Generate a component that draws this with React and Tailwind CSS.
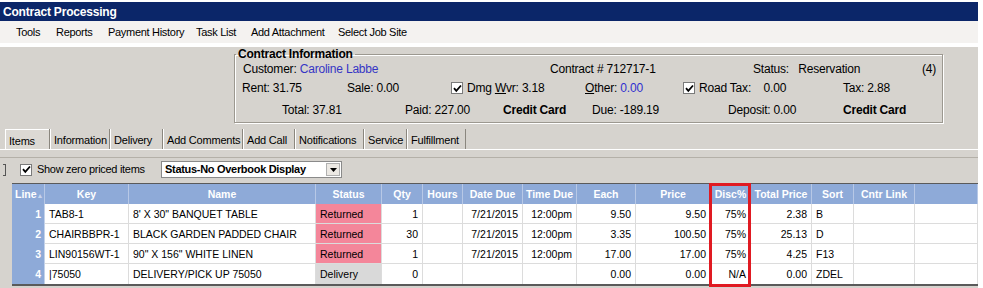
import React from 'react';

const MENU = [
    { label: 'Tools', w: 'w-[40px]' },
    { label: 'Reports', w: 'w-[52px]' },
    { label: 'Payment History', w: 'w-[88px]' },
    { label: 'Task List', w: 'w-[55px]' },
    { label: 'Add Attachment', w: 'w-[87px]' },
    { label: 'Select Job Site', w: 'w-[90px]' }
];

const TABS = [
    { label: 'Items', w: 'w-[44px]', active: true },
    { label: 'Information', w: 'w-[60px]' },
    { label: 'Delivery', w: 'w-[53px]' },
    { label: 'Add Comments', w: 'w-[80px]' },
    { label: 'Add Call', w: 'w-[52px]' },
    { label: 'Notifications', w: 'w-[69px]' },
    { label: 'Service', w: 'w-[43px]' },
    { label: 'Fulfillment', w: 'w-[59px]' }
];

const HEADERS = ['Line', 'Key', 'Name', 'Status', 'Qty', 'Hours', 'Date Due', 'Time Due', 'Each', 'Price', 'Disc%', 'Total Price', 'Sort', 'Cntr Link', ''];

const ROWS = [
    ['1', 'TAB8-1', '8\' X 30" BANQUET TABLE', 'Returned', '1', '', '7/21/2015', '12:00pm', '9.50', '9.50', '75%', '2.38', 'B'],
    ['2', 'CHAIRBBPR-1', 'BLACK GARDEN PADDED CHAIR', 'Returned', '30', '', '7/21/2015', '12:00pm', '3.35', '100.50', '75%', '25.13', 'D'],
    ['3', 'LIN90156WT-1', '90" X 156" WHITE LINEN', 'Returned', '1', '', '7/21/2015', '12:00pm', '17.00', '17.00', '75%', '4.25', 'F13'],
    ['4', '|75050', 'DELIVERY/PICK UP 75050', 'Delivery', '0', '', '', '', '0.00', '0.00', 'N/A', '0.00', 'ZDEL']
];

// alignment per column: l = left, r = right
const ALIGN = ['r', 'l', 'l', 'l', 'r', 'r', 'r', 'r', 'r', 'r', 'r', 'r', 'l', 'l', 'l'];

const GRID = 'grid grid-cols-[33px_84px_187px_66px_41px_40px_60px_54px_59px_75px_40px_61px_42px_61px_1fr]';

const Check = () => (
    <span className="flex h-[12px] w-[12px] shrink-0 items-center justify-center border border-[#7a7a7a] bg-white">
        <svg width="9" height="9" viewBox="0 0 9 9">
            <path d="M1 4.2 L3.3 6.8 L8 1.5" fill="none" stroke="#000" strokeWidth="1.8" />
        </svg>
    </span>
);

const Cell = ({ col, value, row }) => {
    if (col === 0) {
        return (
            <div className="border-r border-[#c3d2ea] bg-[#8eaad8] pr-[3px] text-right font-bold text-white">{value}</div>
        );
    }
    let bg = 'bg-white';
    if (col === 3) bg = value === 'Returned' ? 'bg-[#f4869a]' : 'bg-[#d9d9d9]';
    const align = ALIGN[col] === 'r' ? 'text-right pr-[4px]' : 'text-left pl-[4px]';
    const pad = col === 12 ? 'pl-[2px]' : '';
    return (
        <div className={`${bg} ${align} ${pad} border-r border-[#dcdcdc] ${row < 3 ? 'border-b' : ''} border-b-[#dcdcdc] truncate`}>
            {value}
        </div>
    );
};

export default function App() {
    return (
        <div className="relative h-[288px] w-[983px] overflow-hidden bg-white font-['Liberation_Sans',Arial,sans-serif] text-black">
            <div className="w-[978px] pt-[2px]">
                <div className="flex h-[19px] items-center bg-[#0b2669] pl-[3px] text-[12px] font-bold tracking-[-0.2px] text-white">
                    Contract Processing
                </div>
                <div className="flex h-[22px] items-center whitespace-nowrap bg-[#f4f2f0] pl-[16px] pt-[1px] text-[11px] tracking-[-0.3px]">
                    {MENU.map((m) => (
                        <span key={m.label} className={m.w}>{m.label}</span>
                    ))}
                </div>

                <div className="h-[245px] bg-[#d6d3ce]">
                    <fieldset className="ml-[234px] mt-[4px] h-[76px] w-[709px] whitespace-nowrap border border-[#9c9890] text-[12px] tracking-[-0.2px] shadow-[inset_1px_1px_0_#fff,1px_1px_0_#fff]">
                        <legend className="ml-[1px] px-[2px] text-[12px] font-bold leading-[14px]">Contract Information</legend>
                        <div className="flex h-[16px] items-center pl-[8px] leading-none">
                            <span className="w-[307px]">Customer: <span className="text-[#3535c5]">Caroline Labbe</span></span>
                            <span className="w-[203px]">Contract # 712717-1</span>
                            <span className="w-[169px]">Status:&nbsp;&nbsp; Reservation</span>
                            <span>(4)</span>
                        </div>
                        <div className="mt-[3px] flex h-[16px] items-center pl-[7px] leading-none">
                            <span className="w-[105px]">Rent: 31.75</span>
                            <span className="w-[104px]">Sale: 0.00</span>
                            <span className="flex w-[134px] items-center gap-[4px]">
                                <Check />
                                <span>Dmg <span className="underline">W</span>vr: 3.18</span>
                            </span>
                            <span className="w-[98px]"><span className="underline">O</span>ther: <span className="text-[#2f2fd0]">0.00</span></span>
                            <span className="flex w-[160px] items-center gap-[4px]">
                                <Check />
                                <span>Road Tax:&nbsp;&nbsp;&nbsp; 0.00</span>
                            </span>
                            <span>Tax: 2.88</span>
                        </div>
                        <div className="mt-[6px] flex h-[16px] items-center pl-[47px] leading-none">
                            <span className="w-[123px]">Total: 37.81</span>
                            <span className="w-[98px]">Paid: 227.00</span>
                            <span className="w-[89px] font-bold">Credit Card</span>
                            <span className="w-[136px]">Due: -189.19</span>
                            <span className="w-[115px]">Deposit: 0.00</span>
                            <span className="font-bold">Credit Card</span>
                        </div>
                    </fieldset>

                    <div className="mt-[6px] flex h-[20px] items-end whitespace-nowrap pl-[5px] text-[11px] tracking-[-0.2px]">
                        {TABS.map((t) => (
                            <div
                                key={t.label}
                                className={`${t.w} flex h-[20px] items-center overflow-hidden pt-[3px] ${t.active ? 'border-l border-t border-white bg-[#dcd9d4] pl-[3px]' : 'border-l border-l-[#8a867e] pl-[4px] shadow-[inset_1px_0_0_#fff]'}`}
                            >
                                {t.label}
                            </div>
                        ))}
                        <div className="h-[20px] border-l border-l-[#8a867e]" />
                    </div>
                    <div className="h-[8px] border-t border-white" />

                    <div className="flex h-[24px] items-center whitespace-nowrap border-t border-[#b4b0a8] text-[11px] tracking-[-0.3px]">
                        <span className="ml-[3px] h-[12px] w-[3px] border-b border-r border-t border-[#555]" />
                        <span className="ml-[14px]"><Check /></span>
                        <span className="ml-[5px] w-[124px]">Show zero priced items</span>
                        <div className="flex h-[17px] w-[181px] items-center justify-between border border-[#8a8a8a] bg-white pl-[3px] text-[11px] font-bold">
                            <span>Status-No Overbook Display</span>
                            <span className="mr-[1px] flex h-[13px] w-[14px] items-center justify-center border border-[#b0b0b0] bg-[#ece9e4]">
                                <svg width="7" height="4" viewBox="0 0 7 4"><path d="M0 0 H7 L3.5 4 Z" fill="#000" /></svg>
                            </span>
                        </div>
                    </div>

                    <div className="ml-[12px] mt-[2px] border-b-2 border-t border-[#5a5a5a] text-[10.5px] leading-[20px]">
                        <div className={`${GRID} h-[20px] bg-[#8eaad8] font-bold text-white`}>
                            {HEADERS.map((h, i) => (
                                <div key={i} className={`whitespace-nowrap border-r border-[#b7c8e6] ${i === 0 ? 'pl-[3px] text-left' : 'text-center'}`}>
                                    {h}{i === 0 && <span className="text-[7px] text-[#c8d6ee]">▲</span>}
                                </div>
                            ))}
                        </div>
                        {ROWS.map((r, ri) => (
                            <div key={ri} className={`${GRID} h-[20px]`}>
                                {[...r, '', ''].map((v, ci) => (
                                    <Cell key={ci} col={ci} value={v} row={ri} />
                                ))}
                            </div>
                        ))}
                    </div>
                </div>
            </div>

            <div className="absolute left-[709px] top-[183px] h-[104px] w-[42px] border-[3px] border-[#e01a22]" />
        </div>
    );
}
